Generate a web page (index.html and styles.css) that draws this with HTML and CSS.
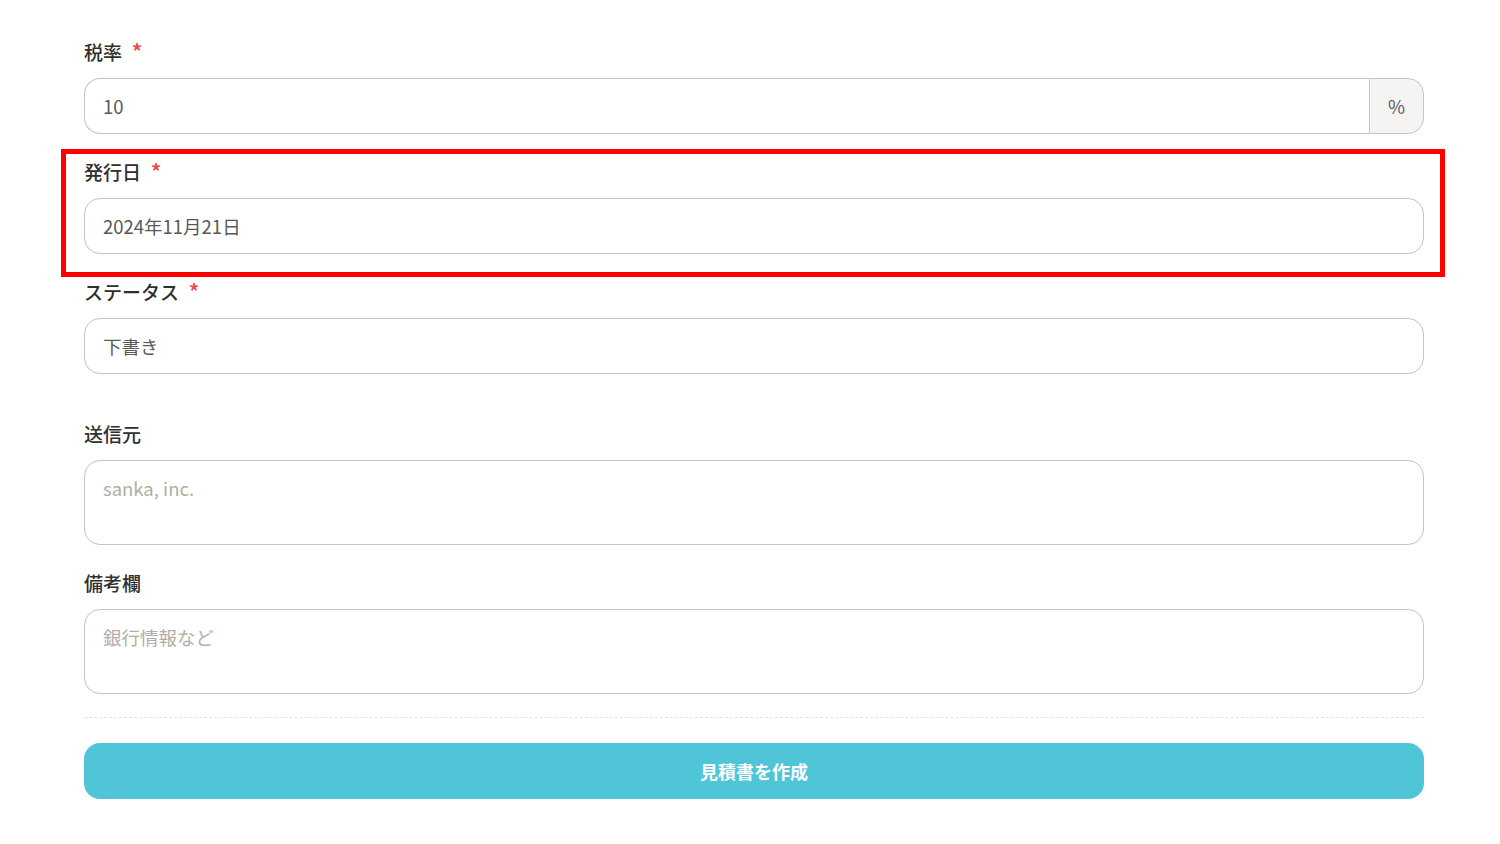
FILE: index.html
```html
<!DOCTYPE html>
<html lang="ja">
<head>
<meta charset="utf-8">
<title>見積書を作成</title>
<link rel="stylesheet" href="styles.css">
</head>
<body>
<form class="form">
  <div class="field">
    <label class="label">税率<span class="req">*</span></label>
    <div class="group">
      <input class="input input-group" type="text" value="10">
      <span class="addon">%</span>
    </div>
  </div>
  <div class="field highlight">
    <label class="label">発行日<span class="req">*</span></label>
    <input class="input" type="text" value="2024年11月21日">
  </div>
  <div class="field">
    <label class="label">ステータス<span class="req">*</span></label>
    <input class="input" type="text" value="下書き">
  </div>
  <div class="field field-spaced">
    <label class="label">送信元</label>
    <textarea class="textarea" placeholder="sanka, inc."></textarea>
  </div>
  <div class="field">
    <label class="label">備考欄</label>
    <textarea class="textarea" placeholder="銀行情報など"></textarea>
  </div>
  <hr class="divider">
  <button class="submit" type="button">見積書を作成</button>
</form>
</body>
</html>
```
FILE: styles.css
```css
* { box-sizing: border-box; }
html, body {
  margin: 0;
  padding: 0;
  background: #ffffff;
}
body {
  font-family: "Noto Sans CJK JP", "Noto Sans", sans-serif;
  color: #333;
}
.form {
  width: 1340px;
  margin-left: 84px;
  padding-top: 39px;
  display: flex;
  flex-direction: column;
}
.field {
  display: flex;
  flex-direction: column;
  margin-bottom: 25px;
}
.field-spaced {
  margin-top: 22px;
}
.highlight {
  position: relative;
}
.highlight::after {
  content: "";
  position: absolute;
  top: -10px;
  left: -23px;
  right: -21px;
  bottom: -23px;
  border: 5px solid #ff0000;
  pointer-events: none;
}
.label {
  font-size: 19px;
  font-weight: 500;
  line-height: 26px;
  height: 26px;
  margin-bottom: 13px;
  color: #2f2f2f;
  display: flex;
  align-items: flex-start;
}
.req {
  color: #ee4b4b;
  font-size: 20px;
  font-weight: 700;
  line-height: 20px;
  margin-left: 10px;
  margin-top: 2px;
}
.input, .textarea {
  width: 100%;
  font-family: "Noto Sans CJK JP", "Noto Sans", sans-serif;
  font-size: 18.5px;
  color: #595959;
  border: 1.5px solid #c4c4c4;
  border-radius: 16px;
  background: #fff;
  padding: 0 18px;
  outline: none;
}
.input {
  height: 56px;
}
.textarea {
  height: 85px;
  padding-top: 14px;
  resize: none;
  line-height: 26px;
}
.textarea::placeholder {
  color: #b3ada5;
}
.group {
  display: flex;
}
.input-group {
  border-top-right-radius: 0;
  border-bottom-right-radius: 0;
  border-right: none;
}
.addon {
  width: 55px;
  flex: none;
  height: 56px;
  display: flex;
  align-items: center;
  justify-content: center;
  background: #f5f4f2;
  border: 1.5px solid #c4c4c4;
  border-radius: 0 16px 16px 0;
  font-size: 18.5px;
  color: #595959;
}
.divider {
  width: 100%;
  margin: -2px 0 25px 0;
  border: none;
  border-top: 1px dashed #e3e3e3;
  height: 0;
}
.submit {
  width: 100%;
  height: 56px;
  border: none;
  border-radius: 16px;
  background: #4fc5d7;
  color: #fff;
  font-family: "Noto Sans CJK JP", "Noto Sans", sans-serif;
  font-size: 18px;
  font-weight: 700;
}
```
